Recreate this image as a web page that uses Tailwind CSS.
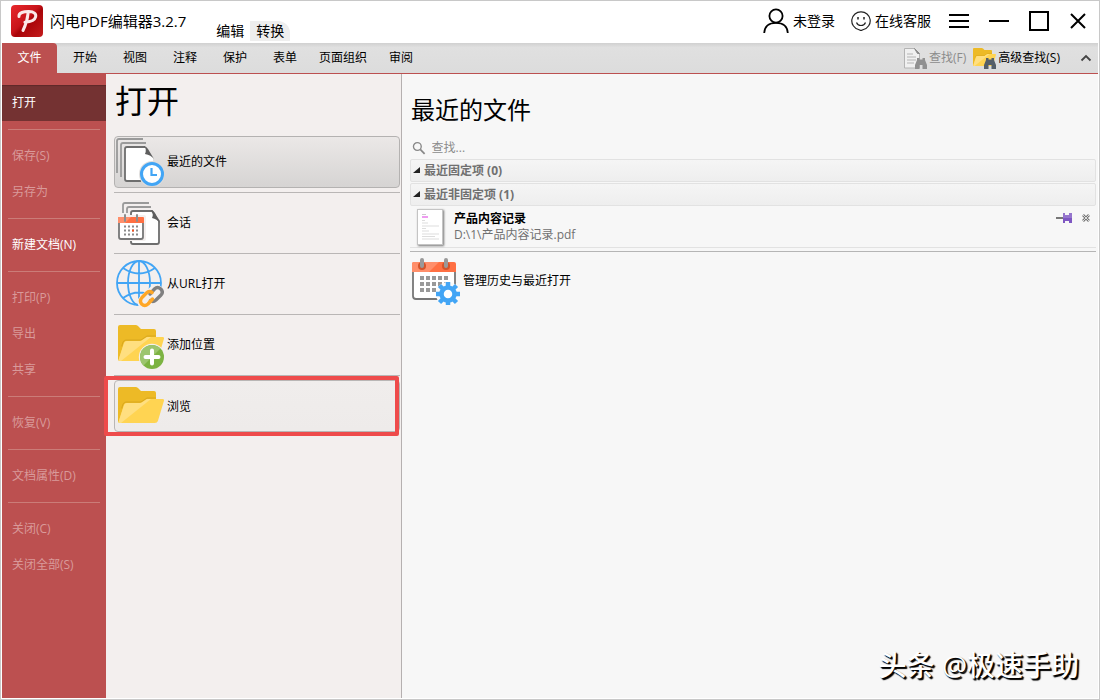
<!DOCTYPE html>
<html lang="zh-CN">
<head>
  <meta charset="UTF-8" />
  <meta name="viewport" content="width=device-width, initial-scale=1.0" />
  <title>闪电PDF编辑器3.2.7</title>
  <script src="https://cdn.jsdelivr.net/npm/@tailwindcss/browser@4"></script>
</head>
<body class="relative min-h-screen flex flex-col bg-white border border-[#c8c8c8] px-px pb-px font-['Open_Sans','Noto_Sans_CJK_SC',sans-serif] text-xs text-black">

  <!-- Shared icons -->
  <svg class="hidden">
    <symbol id="folder" viewBox="0 0 48 48">
      <path d="M2 6q0-2 2-2h15.500q1.500 0 2.500 1l3 3h13q2 0 2 2v20H2z" fill="#edba26"/>
      <path d="M40 15H31l-6 4H10q-2 0-3 2L3 34" fill="none" stroke="#d9a81f" stroke-width="1"/>
      <path d="M2 26v12q0 2 2 2h4L22 22z" fill="#edba26"/>
      <path d="M8 22q.700-2 3-2h13q1.500 0 2.500-1l3-2q1-1 2.500-1h14.500q2 0 1.400 2l-6 20q-.700 2-3 2H4q-1.800 0-1.200-2z" fill="#ffd452"/>
      <path d="M8 22q.700-2 3-2h13q1.500 0 2.500-1l3-2q1-1 2.500-1h3L5 40H4q-1.800 0-1.200-2z" fill="#ffdf80"/>
    </symbol>
    <symbol id="binoculars" viewBox="0 0 12 11">
      <path d="M2 0h2.500v1.500h3V0H10v2l2 5v4H7.500V7h-3v4H0V7l2-5z"/>
    </symbol>
  </svg>

  <!-- Title bar -->
  <header class="flex h-[42px] items-center pb-0.5 pl-[9px] pr-[11px]">
    <svg class="size-8 shrink-0" viewBox="0 0 32 32">
      <defs>
        <linearGradient id="logo" x1="0" y1="0" x2="1" y2="1">
          <stop offset="0" stop-color="#e8282c"/><stop offset=".45" stop-color="#c8141a"/><stop offset=".55" stop-color="#a80408"/><stop offset="1" stop-color="#c41c1c"/>
        </linearGradient>
      </defs>
      <rect width="32" height="32" rx="4" fill="url(#logo)"/>
      <path d="M8 11.500C7.500 7.500 13 6.500 18 6.600c5 .1 7.400 2.200 6.600 5.200-.8 3.300-5 5-10.700 5.400M17 8.500c-.5 6-2.500 12-5 17" fill="none" stroke="#fbe9e9" stroke-width="3" stroke-linecap="round"/>
    </svg>
    <h1 class="ml-[7px] whitespace-nowrap text-[15px] leading-5">闪电PDF编辑器3.2.7</h1>
    <div class="ml-6 flex self-end text-sm leading-5">
      <button class="rounded-tr-lg bg-white px-1.5">编辑</button>
      <button class="rounded-tr-xl bg-[#eeeeee] px-1.5">转换</button>
    </div>

    <div class="ml-auto flex items-center text-sm leading-5 whitespace-nowrap">
      <button class="flex items-center gap-1">
        <svg class="h-[26px] w-[26px]" viewBox="0 0 26 26" fill="none" stroke="#000" stroke-width="1.800">
          <circle cx="13" cy="8" r="6.600"/><path d="M1.200 25C1.500 18.500 6 14.800 13 14.800S24.500 18.500 24.800 25"/>
        </svg>
        未登录
      </button>
      <button class="ml-4 flex items-center gap-1">
        <svg class="size-5" viewBox="0 0 20 20" fill="none" stroke="#222" stroke-width="1.200">
          <path d="M10 .8a9 9 0 0 1 2.500 17.700L10 19.600l-2.500-1.100A9 9 0 0 1 10 .8z"/>
          <path d="M5.500 11.500c1.500 4 7.500 4 9 0"/>
          <path d="M7 6v2.500M13 6v2.500" stroke-width="1.500"/>
        </svg>
        在线客服
      </button>
      <button class="ml-[18px]" aria-label="菜单">
        <svg class="size-5" viewBox="0 0 20 20" stroke="#000" stroke-width="2"><path d="M0 4h20M0 10h20M0 16h20"/></svg>
      </button>
      <button class="ml-5" aria-label="最小化">
        <svg class="size-5" viewBox="0 0 20 20" stroke="#000" stroke-width="2"><path d="M0 10h20"/></svg>
      </button>
      <button class="ml-5" aria-label="最大化">
        <svg class="size-5" viewBox="0 0 20 20" fill="none" stroke="#000" stroke-width="2"><path d="M1 1h18v18H1z"/></svg>
      </button>
      <button class="ml-5" aria-label="关闭">
        <svg class="size-[18px]" viewBox="0 0 18 18" stroke="#000" stroke-width="2"><path d="M2 2l14 14M16 2L2 16"/></svg>
      </button>
    </div>
  </header>

  <!-- Ribbon tabs -->
  <nav class="flex h-[31px] items-stretch border-b border-[#bc5050] bg-linear-to-b from-[#d0d0d0] via-[#e0e0e0] via-15% to-[#dcdcdc] leading-4 whitespace-nowrap">
    <button class="w-[55px] rounded-tr-sm bg-[#bc5050] text-white">文件</button>
    <div class="ml-[5px] flex gap-1">
      <button class="min-w-[46px] px-[7px]">开始</button>
      <button class="min-w-[46px] px-[7px]">视图</button>
      <button class="min-w-[46px] px-[7px]">注释</button>
      <button class="min-w-[46px] px-[7px]">保护</button>
      <button class="min-w-[46px] px-[7px]">表单</button>
      <button class="min-w-[46px] px-[7px]">页面组织</button>
      <button class="min-w-[46px] px-[7px]">审阅</button>
    </div>
    <div class="ml-auto flex items-center pr-1.5">
      <button class="flex items-center gap-0.5 text-[#8c8c8c]">
        <svg class="size-6" viewBox="0 0 24 24">
          <path d="M1.500 2.500h10l5 5V22h-15z" fill="#f0f0f0" stroke="#b4b4b4"/>
          <path d="M11.500 2.500l5 5h-2z" fill="#8a8a8a" stroke="#8a8a8a"/>
          <path d="M4 8h6M4 11h9M4 14h9M4 17h7" stroke="#b4b4b4"/>
          <use href="#binoculars" x="12" y="12" width="12" height="11" fill="#909090"/>
        </svg>
        查找(F)
      </button>
      <button class="ml-1.5 flex items-center gap-0.5">
        <svg class="size-6" viewBox="0 0 24 24">
          <use href="#folder" x="0" y="0" width="24" height="24"/>
          <use href="#binoculars" x="12" y="12" width="12" height="11" fill="#555f68"/>
        </svg>
        高级查找(S)
      </button>
      <button class="ml-5" aria-label="折叠功能区">
        <svg class="size-3" viewBox="0 0 12 12" fill="none" stroke="#444" stroke-width="1.800"><path d="M1.500 8.500L6 4l4.500 4.500"/></svg>
      </button>
    </div>
  </nav>

  <div class="flex flex-1">
    <!-- File menu -->
    <aside class="flex w-[104px] shrink-0 flex-col bg-[#bc5050] pt-[11px] text-[#d99a9a] *:text-left">
      <button class="h-9 shrink-0 bg-[#743232] pl-2.5 text-white shadow-[inset_0_1px_1px_#5f2828]">打开</button>
      <hr class="mx-1.5 my-2 border-[#cb7c78]" />
      <button class="h-9 pl-2.5" disabled>保存(S)</button>
      <button class="h-9 pl-2.5" disabled>另存为</button>
      <hr class="mx-1.5 my-2 border-[#cb7c78]" />
      <button class="h-9 pl-2.5 text-white">新建文档(N)</button>
      <hr class="mx-1.5 my-2 border-[#cb7c78]" />
      <button class="h-9 pl-2.5" disabled>打印(P)</button>
      <button class="h-9 pl-2.5" disabled>导出</button>
      <button class="h-9 pl-2.5" disabled>共享</button>
      <hr class="mx-1.5 my-2 border-[#cb7c78]" />
      <button class="h-9 pl-2.5" disabled>恢复(V)</button>
      <hr class="mx-1.5 my-2 border-[#cb7c78]" />
      <button class="h-9 pl-2.5" disabled>文档属性(D)</button>
      <hr class="mx-1.5 my-2 border-[#cb7c78]" />
      <button class="h-9 pl-2.5" disabled>关闭(C)</button>
      <button class="h-9 pl-2.5" disabled>关闭全部(S)</button>
    </aside>

    <!-- Open sources -->
    <section class="flex w-[296px] shrink-0 flex-col border-r border-[#b5b0b0] bg-[#f3efee] pl-2 pr-px">
      <h2 class="h-[62px] pl-px text-[32px] leading-[54px]">打开</h2>
      <button class="flex h-[52px] items-center gap-[3px] rounded-sm border border-[#b4b2b1] bg-linear-to-b from-[#ebe8e7] to-[#d6d4d3] pl-px">
        <svg class="size-12" viewBox="0 0 48 48" fill="none" stroke="#9a9a9a" stroke-width="1.800">
          <path d="M1 35V3q0-2 2-2h24M5 39V7q0-2 2-2h23"/>
          <path d="M9 11q0-2 2-2h18l8 11v23H11q-2 0-2-2z" fill="#fff" stroke="none"/>
          <path d="M29 9H11q-2 0-2 2v30q0 2 2 2h14" stroke="#6e6e6e"/>
          <path d="M28 8q2 0 4 3l6 10q-3-4-9-5 2-5-1-8z" fill="#5e5e5e" stroke="none"/>
          <circle cx="36" cy="36" r="13" fill="#dfdddc" stroke="none"/>
          <circle cx="36" cy="36" r="10.500" fill="#fff" stroke="#42a5f5" stroke-width="3"/>
          <path d="M35.500 30v7H41" stroke="#42a5f5" stroke-width="2.200"/>
        </svg>
        最近的文件
      </button>
      <hr class="my-1 border-[#b9b6b5]" />
      <button class="flex h-[52px] items-center gap-[3px] pl-0.5">
        <svg class="size-12" viewBox="0 0 48 48" fill="none" stroke="#9a9a9a" stroke-width="1.800">
          <path d="M7 14V6q0-2 2-2h24M11 14v-4q0-2 2-2h22"/>
          <path d="M15 14q0-2 2-2h19l7 10v21q0 2-2 2H17q-2 0-2-2z" fill="#fff" stroke="#6e6e6e"/>
          <path d="M35 11q2 0 4 3l5 10q-3-4-8-5 2-4-1-8z" fill="#5e5e5e" stroke="none"/>
          <rect x="1" y="16" width="29" height="26" rx="2" fill="#f3efee" stroke="none"/>
          <path d="M3 20v18q0 2 2 2h20q2 0 2-2V20z" fill="#fff" stroke="#777"/>
          <path d="M2 24v-5q0-1 1-1h24q1 0 1 1v5z" fill="#ff7043" stroke="none"/>
          <path d="M2 24v-5q0-1 1-1h12l-6 6z" fill="#ff8f6b" stroke="none"/>
          <path d="M9 16v6M21 16v6" stroke="#8d8d8d" stroke-width="2" stroke-linecap="round"/>
          <path d="M8 27.500h14M8 31.500h14M8 35.500h14" stroke="#8a8a8a" stroke-width="2" stroke-dasharray="2 2"/>
          <path d="M16 31.500h2" stroke="#f4511e" stroke-width="2"/>
        </svg>
        会话
      </button>
      <hr class="my-1 border-[#b9b6b5]" />
      <button class="flex h-[52px] items-center gap-[3px] pl-0.5">
        <svg class="size-12" viewBox="0 0 48 48" fill="none" stroke="#42a5f5" stroke-width="1.800">
          <circle cx="23" cy="23" r="22"/>
          <ellipse cx="23" cy="23" rx="11" ry="22"/>
          <path d="M23 1v44M1 23h44M7 8q16 11 32 0M7 38q16-11 32 0"/>
          <path d="M29 42l11-10" stroke="#f3efee" stroke-width="15" stroke-linecap="round"/>
          <path d="M34 34l4.500-5q3-3 6.300 0 3 3.200 0 6.200L40 40q-3 2.500-5.500.5" stroke="#808080" stroke-width="3.400" stroke-linecap="round"/>
          <path d="M36 32.500q-3-2-5.500.500L26 37.500q-3 3.500-.300 6.500 3 2.800 6.300 0l4.500-5" stroke="#ffa726" stroke-width="3.400" stroke-linecap="round"/>
        </svg>
        从URL打开
      </button>
      <hr class="my-1 border-[#b9b6b5]" />
      <button class="flex h-[52px] items-center gap-[3px] pl-0.5">
        <svg class="size-12" viewBox="0 0 48 48">
          <use href="#folder" width="48" height="48"/>
          <circle cx="36" cy="36" r="13.200" fill="#f3efee"/>
          <circle cx="36" cy="36" r="12" fill="#7cb342"/>
          <path d="M27.500 44.500a12 12 0 0 1 17-17z" fill="#9cc56e"/>
          <path d="M36 29.500v13M29.500 36h13" stroke="#fff" stroke-width="4" stroke-linecap="round"/>
        </svg>
        添加位置
      </button>
      <hr class="my-1 border-[#b9b6b5]" />
      <div class="relative">
        <button class="flex h-[52px] w-full items-center gap-[3px] rounded-sm border border-[#b9b6b5] bg-linear-to-b from-[#f0edec] to-[#eeebea] pt-0.5 pl-px">
          <svg class="size-12" viewBox="0 0 48 48"><use href="#folder" width="48" height="48"/></svg>
          浏览
        </button>
        <!-- Highlight frame -->
        <div class="pointer-events-none absolute -inset-y-1 -left-2.5 right-px rounded-xs border-4 border-[#ee4b4b]"></div>
      </div>
    </section>

    <!-- Recent files -->
    <main class="flex-1 bg-[#f7f7f7] pl-2 pr-0.5">
      <h2 class="pt-5 pl-px text-2xl leading-8">最近的文件</h2>
      <label class="mt-2.5 flex h-[23px] items-center gap-1.5 pl-0.5">
        <svg class="size-3.5" viewBox="0 0 14 14" fill="none" stroke="#888" stroke-width="1.400"><circle cx="5.500" cy="5.500" r="4"/><path d="M8.500 8.500l4.500 4.500" stroke-width="1.800"/></svg>
        <input type="text" placeholder="查找..." aria-label="查找" class="w-full bg-transparent leading-4 outline-none placeholder:text-[#8c8c8c]" />
      </label>
      <button class="flex h-[23px] w-full items-center gap-1 rounded-xs border border-[#e2e2e2] bg-linear-to-b from-[#f5f5f5] to-[#eeeeee] pl-0.5 font-bold text-[#707070]">
        <svg class="size-[7px]" viewBox="0 0 7 7"><path d="M7 0v6H0z" fill="#222"/></svg>
        最近固定项 (0)
      </button>
      <button class="mt-px flex h-[23px] w-full items-center gap-1 rounded-xs border border-[#e2e2e2] bg-linear-to-b from-[#f5f5f5] to-[#eeeeee] pl-0.5 font-bold text-[#707070]">
        <svg class="size-[7px]" viewBox="0 0 7 7"><path d="M7 0v6H0z" fill="#222"/></svg>
        最近非固定项 (1)
      </button>
      <div class="flex h-[42px] items-center border-b border-[#e2e2e2] pt-px pl-[7px] pr-1.5">
        <svg class="h-9 w-[26px] border border-[#c4c4c4] bg-white shadow-[1px_1px_2px_#777]" viewBox="0 0 24 34" fill="none">
          <path d="M4 4.500h4" stroke="#ccc"/><path d="M4 7h6" stroke="#ee9cf0" stroke-width="2"/>
          <path d="M4 10.500h3M4 13h6M4 16h17M4 18.500h4M4 21h7M4 24h17M4 26.500h13M4 29h17" stroke="#ddd"/>
        </svg>
        <a href="#" class="ml-[11px] flex-1 leading-4">
          <span class="block font-bold">产品内容记录</span>
          <span class="block text-[#707070]">D:\1\产品内容记录.pdf</span>
        </a>
        <button class="mb-[18px]" aria-label="固定">
          <svg class="h-2.5 w-4" viewBox="0 0 16 10"><path d="M0 5h7" stroke="#777" stroke-width="2"/><path d="M7 0h2v2h4V0h3v10h-3V8H9v2H7z" fill="#7e57c2"/><path d="M7 0h2v2h4V0h3v5H7z" fill="#9575cd"/></svg>
        </button>
        <button class="mb-[18px] ml-2.5" aria-label="移除">
          <svg class="size-2" viewBox="0 0 8 8" fill="none"><path d="M1 1l6 6M7 1L1 7" stroke="#777" stroke-width="2.600"/><path d="M1 1l6 6M7 1L1 7" stroke="#ddd" stroke-width="1"/></svg>
        </button>
      </div>
      <hr class="mt-[3px] border-[#b5b5b5]" />
      <button class="mt-[5px] flex items-center gap-[3px] pl-0.5">
        <svg class="size-12" viewBox="0 0 48 48" fill="none">
          <path d="M1 14v25q0 3 3 3h36q3 0 3-3V14z" fill="#fff" stroke="#777" stroke-width="1.800"/>
          <path d="M0 15V7q0-2 2-2h40q2 0 2 2v8z" fill="#ff7043"/>
          <path d="M0 15V7q0-2 2-2h25L17 15z" fill="#ff8f6b"/>
          <circle cx="10" cy="9" r="4" fill="#d3542b"/><circle cx="34" cy="9" r="4" fill="#d3542b"/>
          <path d="M10 3v6M34 3v6" stroke="#999" stroke-width="4" stroke-linecap="round"/>
          <path d="M8 21h28M8 27h28M8 33h22" stroke="#999" stroke-width="4" stroke-dasharray="4 2"/>
          <circle cx="36" cy="37" r="12" fill="#fafafa"/>
          <path d="M36 25v24M24 37h24M27.500 28.500l17 17M44.500 28.500l-17 17" stroke="#42a5f5" stroke-width="4.500"/>
          <circle cx="36" cy="37" r="6.500" fill="#fff" stroke="#42a5f5" stroke-width="4.500"/>
        </svg>
        管理历史与最近打开
      </button>
    </main>
  </div>

  <p class="pointer-events-none absolute right-5 bottom-4 text-[28px] leading-9 font-medium whitespace-nowrap text-white [text-shadow:1px_1px_1px_#000,2px_2px_1px_#000]">头条 @极速手助</p>
</body>
</html>
